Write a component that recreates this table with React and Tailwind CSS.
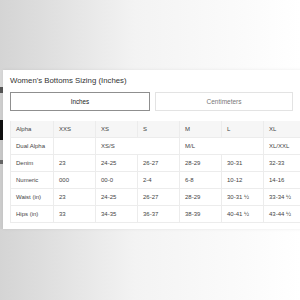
import React from 'react';

const columns = ['XXS', 'XS', 'S', 'M', 'L', 'XL'];

const rows = [
  { label: 'Denim', values: ['23', '24-25', '26-27', '28-29', '30-31', '32-33'] },
  { label: 'Numeric', values: ['000', '00-0', '2-4', '6-8', '10-12', '14-16'] },
  { label: 'Waist (in)', values: ['23', '24-25', '26-27', '28-29', '30-31 ½', '33-34 ½'] },
  { label: 'Hips (in)', values: ['33', '34-35', '36-37', '38-39', '40-41 ½', '43-44 ½'] },
];

const cell = 'h-[17px] flex items-center pl-[5px] border-r border-b border-[#ececec] whitespace-nowrap';

const SizeTable = () => (
  <div className="grid grid-cols-[43px_repeat(6,42px)] border-l border-[#ececec] text-[6px] text-[#444]">
    {/* header */}
    <div className={`${cell} bg-[#f6f6f6]`}>Alpha</div>
    {columns.map(c => (
      <div key={c} className={`${cell} bg-[#f6f6f6]`}>{c}</div>
    ))}

    {/* dual alpha spans two columns where sizes merge */}
    <div className={cell}>Dual Alpha</div>
    <div className={cell}></div>
    <div className={`${cell} col-span-2`}>XS/S</div>
    <div className={`${cell} col-span-2`}>M/L</div>
    <div className={cell}>XL/XXL</div>

    {rows.map(row => (
      <React.Fragment key={row.label}>
        <div className={cell}>{row.label}</div>
        {row.values.map((v, i) => (
          <div key={i} className={cell}>{v}</div>
        ))}
      </React.Fragment>
    ))}
  </div>
);

export default function App() {
  return (
    <div
      className="w-[300px] h-[300px] overflow-hidden bg-gradient-to-r from-[#d4d4d4] via-[#f3f3f3] via-45% to-white"
      style={{ fontFamily: '"Liberation Sans", Arial, sans-serif' }}
    >
      <div className="flex pt-[70px]">
        {/* what peeks out behind the sheet */}
        <div className="w-[3px] shrink-0 flex flex-col">
          <div className="h-[17px] bg-[#d9d9d9]"></div>
          <div className="h-[6px] bg-[#555]"></div>
          <div className="h-[27px] bg-[#cfcfcf]"></div>
          <div className="h-[20px] bg-[#111]"></div>
          <div className="h-[20px] bg-[#c8c8c8]"></div>
          <div className="h-[4px] bg-[#666]"></div>
          <div className="h-[65px] bg-[#cdcdcd]"></div>
        </div>

        <div className="w-[310px] shrink-0 bg-white pl-[7px] pt-[4px] pb-[6px] shadow-[0_0_3px_rgba(0,0,0,0.08)]">
          <h2 className="text-[7.8px] leading-[14px] text-[#333]">Women's Bottoms Sizing (Inches)</h2>

          <div className="flex gap-[5px] mt-[4px]">
            <button className="w-[140px] h-[19px] border border-[#8f8f8f] text-[6.3px] text-[#222] flex items-center justify-center">
              Inches
            </button>
            <button className="w-[138px] h-[19px] border border-[#e3e3e3] text-[6.5px] text-[#777] flex items-center justify-center">
              Centimeters
            </button>
          </div>

          <div className="mt-[10px]">
            <SizeTable />
          </div>
        </div>
      </div>
    </div>
  );
}
